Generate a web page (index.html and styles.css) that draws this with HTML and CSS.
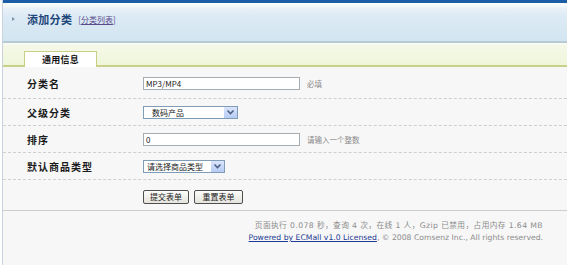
FILE: index.html
```html
<!DOCTYPE html>
<html lang="zh-CN">
<head>
<meta charset="utf-8">
<title>添加分类</title>
<link rel="stylesheet" href="styles.css">
</head>
<body>
<div class="page">
  <div class="topbar"></div>
  <div class="header">
    <span class="bullet"></span>
    <span class="title">添加分类</span>
    <a class="sublink" href="#">[<u>分类列表</u>]</a>
  </div>
  <div class="tabbar">
    <div class="tab">通用信息</div>
  </div>
  <div class="form">
    <div class="row first">
      <div class="label">分类名</div>
      <div class="field"><span class="input">MP3/MP4</span><span class="hint">必填</span></div>
    </div>
    <div class="row">
      <div class="label">父级分类</div>
      <div class="field"><span class="select s1"><span class="stext">数码产品</span><span class="arrow"><svg width="13" height="11" viewBox="0 0 13 11"><path d="M3.5 3.5 L6.5 6.5 L9.5 3.5" fill="none" stroke="#4d6185" stroke-width="1.6"/></svg></span></span></div>
    </div>
    <div class="row">
      <div class="label">排序</div>
      <div class="field"><span class="input">0</span><span class="hint">请输入一个整数</span></div>
    </div>
    <div class="row">
      <div class="label">默认商品类型</div>
      <div class="field"><span class="select s2"><span class="stext">请选择商品类型</span><span class="arrow"><svg width="13" height="11" viewBox="0 0 13 11"><path d="M3.5 3.5 L6.5 6.5 L9.5 3.5" fill="none" stroke="#4d6185" stroke-width="1.6"/></svg></span></span></div>
    </div>
    <div class="actions">
      <button class="btn b1" type="button">提交表单</button>
      <button class="btn b2" type="button">重置表单</button>
    </div>
  </div>
  <div class="footer">
    <div class="stats">页面执行 0.078 秒，查询 4 次，在线 1 人，Gzip 已禁用，占用内存 1.64 MB</div>
    <div><a class="powered" href="#">Powered by ECMall v1.0 Licensed</a>, © 2008 Comsenz Inc., All rights reserved.</div>
  </div>
</div>
</body>
</html>
```

FILE: styles.css
```css
html, body {
  margin: 0;
  padding: 0;
  background: #ffffff;
}
body {
  font-family: "Noto Sans CJK SC", "DejaVu Sans", sans-serif;
  width: 567px;
  height: 265px;
  overflow: hidden;
}
.page {
  margin-left: 2px;
  border-left: 1px solid #c9d3de;
  height: 265px;
  background: #f7f7f7;
}
.topbar {
  height: 3px;
  background: #1b5ea7;
}
.header {
  height: 40px;
  box-sizing: border-box;
  border-bottom: 2px solid #b6cad6;
  background: linear-gradient(to bottom, #fafdf6 0px, #f4f9fb 3px, #e6f0f8 6px, #dceaf5 14px, #d5e7f2 30px, #d3e5ef 38px);
  display: flex;
  align-items: center;
  padding-left: 9px;
  padding-bottom: 6px;
}
.bullet {
  width: 0;
  height: 0;
  border-top: 2px solid transparent;
  border-bottom: 2px solid transparent;
  border-left: 3px solid #7d98ad;
  margin-right: 12px;
}
.title {
  font-size: 11px;
  font-weight: bold;
  color: #1c4679;
  letter-spacing: 0.3px;
}
.sublink {
  margin-left: 6px;
  font-size: 8px;
  color: #5a4c8c;
  text-decoration: none;
}
.sublink u {
  text-decoration: underline;
}
.tabbar {
  height: 24px;
  box-sizing: border-box;
  border-top: 2px solid #f8f9f1;
  border-bottom: 2px solid #c8d08a;
  background: linear-gradient(to bottom, #f5f8e8, #eff6da);
  padding-left: 21px;
  display: flex;
  align-items: flex-end;
}
.tab {
  width: 73px;
  height: 16px;
  margin-bottom: -2px;
  box-sizing: border-box;
  border: 1px solid #c9d086;
  border-bottom: none;
  background: #ffffff;
  font-size: 9px;
  font-weight: bold;
  color: #111;
  letter-spacing: 0.3px;
  display: flex;
  align-items: center;
  justify-content: center;
}
.form {
  background: #f7f7f7;
}
.row {
  display: flex;
  align-items: center;
  height: 25px;
  border-bottom: 1px dashed #cfcfcf;
  padding-top: 1px;
}
.row.first {
  height: 29px;
  padding-top: 2px;
}
.label {
  width: 116px;
  padding-left: 24px;
  box-sizing: content-box;
  font-size: 10px;
  font-weight: bold;
  color: #1a1a1a;
  letter-spacing: 1px;
}
.field {
  display: flex;
  align-items: center;
}
.input {
  width: 157px;
  height: 13px;
  box-sizing: border-box;
  border: 1px solid #a5acb2;
  background: #ffffff;
  font-size: 8px;
  color: #222;
  padding-left: 2px;
  line-height: 11px;
}
.hint {
  margin-left: 7px;
  font-size: 7.5px;
  color: #8a8a8a;
}
.select {
  height: 13px;
  box-sizing: border-box;
  border: 1px solid #7f9db9;
  background: #ffffff;
  display: flex;
  align-items: center;
  justify-content: space-between;
}
.s1 { width: 95px; }
.s2 { width: 82px; }
.stext {
  font-size: 8px;
  color: #222;
  padding-left: 8px;
  line-height: 11px;
}
.s2 .stext { padding-left: 3px; }
.arrow {
  width: 13px;
  height: 11px;
  background: linear-gradient(to bottom, #dbe5fb, #b6cbf4);
  display: flex;
}
.actions {
  height: 31px;
  border-bottom: 1px solid #c9ced3;
  padding-left: 140px;
  padding-top: 10px;
  box-sizing: border-box;
  display: flex;
  gap: 5px;
}
.btn {
  height: 14px;
  padding: 0;
  border: 1px solid #4f4f4f;
  border-radius: 2px;
  background: linear-gradient(to bottom, #fcfcfb, #e4e3dc);
  font-family: "Noto Sans CJK SC", sans-serif;
  font-size: 8px;
  color: #222;
  line-height: 12px;
}
.b1 { width: 46px; }
.b2 { width: 49px; }
.footer {
  padding-top: 9px;
  padding-right: 24px;
  text-align: right;
  font-family: "DejaVu Sans", "Noto Sans CJK SC", sans-serif;
  font-size: 7.7px;
  line-height: 12px;
  color: #8c8c8c;
}
.stats {
  letter-spacing: 0.4px;
}
.powered {
  color: #1d3a95;
  text-decoration: underline;
}
```
